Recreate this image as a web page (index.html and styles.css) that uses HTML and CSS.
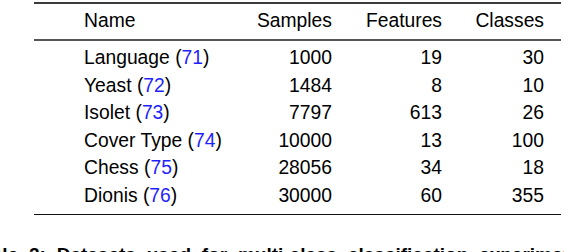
FILE: index.html
```
<!DOCTYPE html>
<html>
<head>
<meta charset="utf-8">
<link rel="stylesheet" href="styles.css">
</head>
<body>
<div class="page">
  <table class="data">
    <colgroup>
      <col class="c-name"><col class="c-num1"><col class="c-num2"><col class="c-num3"><col class="c-pad">
    </colgroup>
    <thead>
      <tr>
        <th class="name">Name</th>
        <th class="num">Samples</th>
        <th class="num">Features</th>
        <th class="num">Classes</th>
        <th></th>
      </tr>
    </thead>
    <tbody>
      <tr class="first"><td class="name">Language (<span class="ref">71</span>)</td><td class="num">1000</td><td class="num">19</td><td class="num">30</td><td></td></tr>
      <tr><td class="name">Yeast (<span class="ref">72</span>)</td><td class="num">1484</td><td class="num">8</td><td class="num">10</td><td></td></tr>
      <tr><td class="name">Isolet (<span class="ref">73</span>)</td><td class="num">7797</td><td class="num">613</td><td class="num">26</td><td></td></tr>
      <tr><td class="name">Cover Type (<span class="ref">74</span>)</td><td class="num">10000</td><td class="num">13</td><td class="num">100</td><td></td></tr>
      <tr><td class="name">Chess (<span class="ref">75</span>)</td><td class="num">28056</td><td class="num">34</td><td class="num">18</td><td></td></tr>
      <tr class="last"><td class="name">Dionis (<span class="ref">76</span>)</td><td class="num">30000</td><td class="num">60</td><td class="num">355</td><td></td></tr>
    </tbody>
  </table>
  <p class="caption">Table 2: Datasets used for multi-class classification experiments.</p>
</div>
</body>
</html>
```

FILE: styles.css
```
html, body {
  margin: 0;
  padding: 0;
  background: #fff;
}
body {
  font-family: "Liberation Sans", Arial, sans-serif;
  color: #000;
  overflow: hidden;
  height: 252px;
}
.page {
  padding: 2px 0 0 34px;
  width: 527px;
}
.data {
  width: 527px;
  table-layout: fixed;
  border-collapse: collapse;
  border-spacing: 0;
  font-size: 19.3px;
  line-height: 27.5px;
  border-top: 2px solid #3c3c3c;
  border-bottom: 1px solid #111;
}
.c-name { width: 190px; }
.c-num1 { width: 108px; }
.c-num2 { width: 110px; }
.c-num3 { width: 102px; }
.c-pad { width: 17px; }
.data th, .data td {
  padding: 0;
  font-weight: normal;
  white-space: nowrap;
}
.data thead th {
  padding-top: 3px;
  padding-bottom: 4.5px;
  border-bottom: 2px solid #555;
}
.name {
  text-align: left;
  padding-left: 50px !important;
}
.num {
  text-align: right;
}
.first td { padding-top: 3px; }
.last td { padding-bottom: 5px; }
.ref { color: #1f1fff; }
.caption {
  margin: 29px 0 0 -64px;
  font-size: 19px;
  font-weight: bold;
  white-space: nowrap;
  word-spacing: 5.5px;
}
```
